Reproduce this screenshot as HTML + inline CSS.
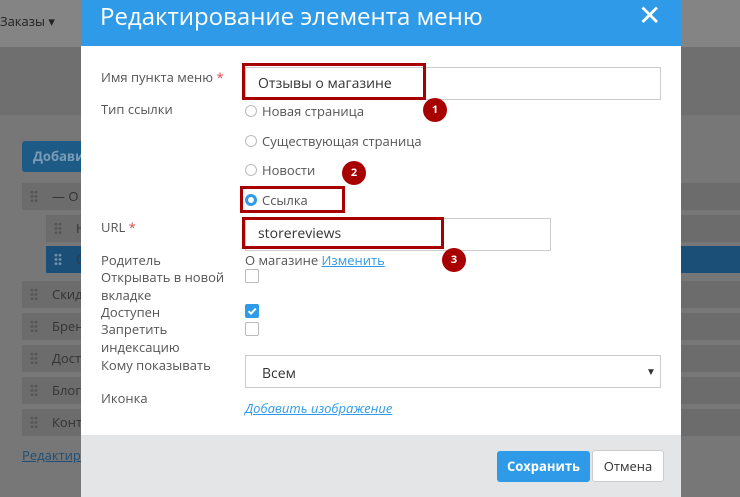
<!DOCTYPE html><html><head><meta charset="utf-8"><style>
*{box-sizing:border-box;margin:0;padding:0}
body{width:740px;height:497px;overflow:hidden;position:relative;background:#777;font-family:"Open Sans","Liberation Sans","DejaVu Sans",sans-serif;font-size:13px;color:#555}
.a{position:absolute}
.row{position:absolute;background:#6c6c6c;height:27px;color:#333;font-size:13px;line-height:27px;padding-left:30px}
.dots{position:absolute;left:8px;top:7px;width:8px;height:13px;background:radial-gradient(circle,#555 1.3px,transparent 1.6px) 0 0/4px 4.3px}
.lab{position:absolute;left:101px;font-size:13px;color:#555;line-height:18px}
.radio{position:absolute;left:245px;width:12px;height:12px;border:1px solid #bbb;border-radius:50%;background:#fff}
.rt{position:absolute;left:262px;font-size:13px;color:#555}
.cb{position:absolute;left:245px;width:14px;height:14px;border:1px solid #bbb;border-radius:2px;background:#fff}
.red{position:absolute;border:3px solid #a80000}
.badge{position:absolute;width:24px;height:24px;border-radius:50%;background:#a80000;color:#fff;font-size:11px;font-weight:bold;text-align:center;line-height:24px}
.inp{position:absolute;background:#fff;border:1px solid #ccc}
</style></head><body>
<div class="a" style="left:0;top:0;width:740px;height:47px;background:#848484"></div>
<div class="a" style="left:0;top:47px;width:740px;height:68px;background:#6f6f6f"></div>
<div class="a" style="left:0;top:12px;font-size:13px;color:#222">Заказы &#9662;</div>
<div class="a" style="left:22px;top:141px;width:70px;height:31px;background:#1e5a86;border-radius:3px;color:#7a9bb5;font-weight:bold;line-height:31px;padding-left:11px">Добавит</div>
<div class="row" style="left:22px;top:183px;width:718px"><div class="dots"></div>— О</div>
<div class="row" style="left:46px;top:215px;width:694px"><div class="dots"></div>Н</div>
<div class="row" style="left:46px;top:246px;width:694px;background:#1c4f77"><div class="dots" style="background:radial-gradient(circle,#6d8fab 1.3px,transparent 1.6px) 0 0/4px 4.3px"></div>С</div>
<div class="row" style="left:22px;top:281px;width:718px"><div class="dots"></div>Скид</div>
<div class="row" style="left:22px;top:313px;width:718px"><div class="dots"></div>Брен</div>
<div class="row" style="left:22px;top:345px;width:718px"><div class="dots"></div>Дост</div>
<div class="row" style="left:22px;top:377px;width:718px"><div class="dots"></div>Блог</div>
<div class="row" style="left:22px;top:409px;width:718px"><div class="dots"></div>Конт</div>
<div class="a" style="left:22px;top:446px;color:#1d4f78;text-decoration:underline">Редактир</div>

<div class="a" style="left:81px;top:0;width:600px;height:497px;background:#fff"></div>
<div class="a" style="left:81px;top:0;width:600px;height:46px;background:#2f9be8"></div>
<div class="a" style="left:100px;top:1px;font-size:24px;color:#fff;line-height:32px">Редактирование элемента меню</div>
<div class="a" style="left:638px;top:0px;font-size:28px;color:#fff;font-weight:bold;line-height:30px">✕</div>
<div class="a" style="left:81px;top:435px;width:600px;height:62px;background:#e4e5e6"></div>

<div class="lab" style="top:68px">Имя пункта меню <span style="color:#d44">*</span></div>
<div class="inp" style="left:245px;top:67px;width:416px;height:33px"></div>
<div class="a" style="left:258px;top:74px;font-size:14px;color:#333">Отзывы о магазине</div>
<div class="red" style="left:242px;top:63px;width:184px;height:37px"></div>
<div class="badge" style="left:423px;top:98px">1</div>

<div class="lab" style="top:100px">Тип ссылки</div>
<div class="radio" style="top:105px"></div><div class="rt" style="top:102px">Новая страница</div>
<div class="radio" style="top:135px"></div><div class="rt" style="top:132px">Существующая страница</div>
<div class="radio" style="top:164px"></div><div class="rt" style="top:161px">Новости</div>
<div class="radio" style="top:194px;border:3.5px solid #2f9be8"></div><div class="rt" style="top:191px">Ссылка</div>
<div class="red" style="left:240px;top:186px;width:105px;height:27px"></div>
<div class="badge" style="left:342px;top:161px">2</div>

<div class="lab" style="top:218px">URL <span style="color:#d44">*</span></div>
<div class="inp" style="left:245px;top:218px;width:306px;height:33px"></div>
<div class="a" style="left:258px;top:224px;font-size:14px;color:#333">storereviews</div>
<div class="red" style="left:242px;top:217px;width:202px;height:32px"></div>
<div class="badge" style="left:442px;top:248px">3</div>

<div class="lab" style="top:251px">Родитель</div>
<div class="a" style="left:245px;top:251px;line-height:18px">О магазине <span style="color:#2f9be8;text-decoration:underline">Изменить</span></div>
<div class="lab" style="top:268px">Открывать в новой<br>вкладке</div>
<div class="cb" style="top:269px"></div>
<div class="lab" style="top:303px">Доступен</div>
<div class="cb" style="top:304px;background:#2f9be8;border-color:#2f9be8"><svg width="12" height="12" viewBox="0 0 12 12" style="position:absolute;left:0;top:0"><path d="M2.5 6.2 L5 8.6 L9.8 3.6" stroke="#fff" stroke-width="2" fill="none"/></svg></div>
<div class="lab" style="top:320px">Запретить<br>индексацию</div>
<div class="cb" style="top:322px"></div>
<div class="lab" style="top:356px">Кому показывать</div>
<div class="inp" style="left:245px;top:355px;width:416px;height:33px"></div>
<div class="a" style="left:262px;top:364px;font-size:14px;color:#333">Всем</div>
<div class="a" style="left:646px;top:364px;font-size:10px;color:#333">▼</div>
<div class="lab" style="top:389px">Иконка</div>
<div class="a" style="left:245px;top:399px;font-style:italic;color:#2f9be8;text-decoration:underline">Добавить изображение</div>

<div class="a" style="left:497px;top:451px;width:93px;height:31px;background:#2f9be8;border-radius:3px;color:#fff;font-weight:bold;text-align:center;line-height:31px">Сохранить</div>
<div class="a" style="left:592px;top:450px;width:72px;height:32px;background:#fff;border:1px solid #ccc;border-radius:3px;color:#333;text-align:center;line-height:30px">Отмена</div>
</body></html>
